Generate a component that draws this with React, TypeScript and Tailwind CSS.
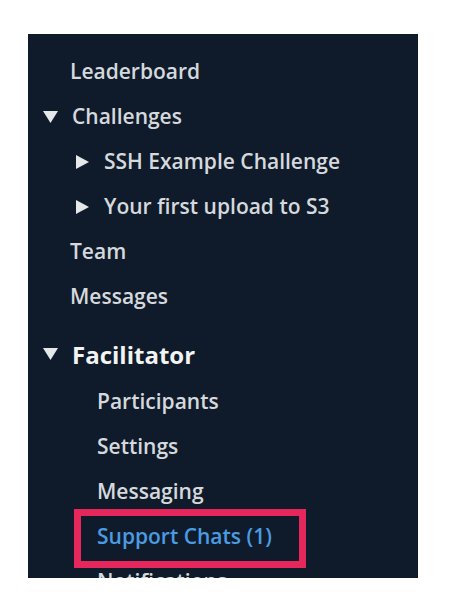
import React from "react";

const Down = () => (
  <svg width="15" height="12" viewBox="0 0 15 12" className="shrink-0">
    <polygon points="0,0 15,0 7.5,12" fill="#e5e7e9" />
  </svg>
);
const Right = () => (
  <svg width="13" height="14" viewBox="0 0 13 14" className="shrink-0">
    <polygon points="0,0 13,7 0,14" fill="#e5e7e9" />
  </svg>
);

export default function App() {
  const font = { fontFamily: '"Open Sans", "Noto Sans", sans-serif' };
  const base = "h-[45px] shrink-0 leading-[45px] text-[21px] font-semibold whitespace-nowrap";
  const row = `${base} text-[#d5d9dd]`;
  return (
    <div className="w-[456px] h-[605px] bg-white pt-[34px] pl-[28px]" style={font}>
      <div className="w-[390px] h-[544px] bg-[#0f1b2a] overflow-hidden pt-[15px] flex flex-col">
        <div className={`${row} pl-[42px]`}>Leaderboard</div>
        <div className={`${row} pl-[15px] flex items-center gap-[14px]`}>
          <Down />
          <span>Challenges</span>
        </div>
        <div className={`${row} pl-[48px] flex items-center gap-[15px]`}>
          <Right />
          <span>SSH Example Challenge</span>
        </div>
        <div className={`${row} pl-[48px] flex items-center gap-[15px]`}>
          <Right />
          <span>Your first upload to S3</span>
        </div>
        <div className={`${row} pl-[42px]`}>Team</div>
        <div className={`${row} pl-[42px]`}>Messages</div>
        <div className="h-[50px] shrink-0 leading-[45px] mt-[10px] pl-[15px] flex items-center gap-[14px] text-[24px] font-bold text-[#f2f3f3] whitespace-nowrap">
          <Down />
          <span>Facilitator</span>
        </div>
        <div className={`${row} pl-[69px]`}>Participants</div>
        <div className={`${row} pl-[69px]`}>Settings</div>
        <div className={`${row} pl-[69px]`}>Messaging</div>
        <div className={`${base} pl-[69px] relative text-[#4b9be3]`}>
          Support Chats (1)
          <div className="absolute left-[46px] top-[-5px] w-[232px] h-[59px] border-[7px] border-[#e5275b]" />
        </div>
        <div className={`${row} pl-[69px]`}>Notifications</div>
      </div>
    </div>
  );
}
